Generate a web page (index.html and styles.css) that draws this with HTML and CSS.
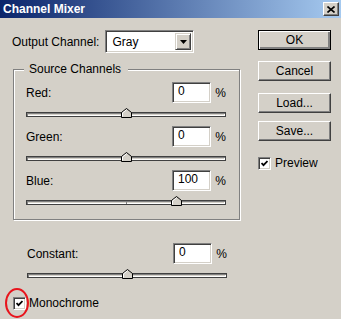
FILE: index.html
```html
<!DOCTYPE html>
<html lang="en">
<head>
  <meta charset="UTF-8">
  <meta name="viewport" content="width=device-width, initial-scale=1.0">
  <title>Channel Mixer</title>
  <link rel="stylesheet" href="styles.css">
</head>
<body>

<div class="window">
  <!-- Title bar -->
  <div class="titlebar">
    <span class="title">Channel Mixer</span>
    <button class="close" type="button">
      <svg width="8" height="7" viewBox="0 0 8 7"><path d="M0.5 0.5 L7.5 6.5 M7.5 0.5 L0.5 6.5" stroke="#000" stroke-width="1.6"/></svg>
    </button>
  </div>

  <div class="body">
    <div class="main">
      <div class="output-row">
        <span class="label">Output Channel:</span>
        <div class="select">
          <span class="select-text">Gray</span>
          <span class="drop">
            <svg width="7" height="4" viewBox="0 0 7 4"><path d="M0 0 H7 L3.5 4 Z" fill="#000"/></svg>
          </span>
        </div>
      </div>

      <!-- Source Channels group -->
      <fieldset class="group">
        <legend>Source Channels</legend>

        <div class="channel">
          <div class="value-row">
            <span class="name">Red:</span>
            <span class="field">0</span>
            <span class="pct">%</span>
          </div>
          <div class="slider">
            <div class="track"></div>
            <svg class="thumb" style="left: 50%;" width="11" height="10" viewBox="0 0 11 10"><path d="M0.5 9.5 V4.5 L5.5 0.5 L10.5 4.5 V9.5 Z" fill="#d4d0c8" stroke="#000"/><path d="M1.5 8.5 V5 L5.5 1.8" fill="none" stroke="#fff"/></svg>
          </div>
        </div>

        <div class="channel">
          <div class="value-row">
            <span class="name">Green:</span>
            <span class="field">0</span>
            <span class="pct">%</span>
          </div>
          <div class="slider">
            <div class="track"></div>
            <svg class="thumb" style="left: 50%;" width="11" height="10" viewBox="0 0 11 10"><path d="M0.5 9.5 V4.5 L5.5 0.5 L10.5 4.5 V9.5 Z" fill="#d4d0c8" stroke="#000"/><path d="M1.5 8.5 V5 L5.5 1.8" fill="none" stroke="#fff"/></svg>
          </div>
        </div>

        <div class="channel">
          <div class="value-row">
            <span class="name">Blue:</span>
            <span class="field">100</span>
            <span class="pct">%</span>
          </div>
          <div class="slider">
            <div class="track"><span class="mid"></span></div>
            <svg class="thumb" style="left: 75%;" width="11" height="10" viewBox="0 0 11 10"><path d="M0.5 9.5 V4.5 L5.5 0.5 L10.5 4.5 V9.5 Z" fill="#d4d0c8" stroke="#000"/><path d="M1.5 8.5 V5 L5.5 1.8" fill="none" stroke="#fff"/></svg>
          </div>
        </div>
      </fieldset>

      <!-- Constant -->
      <div class="channel constant">
        <div class="value-row">
          <span class="name">Constant:</span>
          <span class="field">0</span>
          <span class="pct">%</span>
        </div>
        <div class="slider">
          <div class="track"></div>
          <svg class="thumb" style="left: 50%;" width="11" height="10" viewBox="0 0 11 10"><path d="M0.5 9.5 V4.5 L5.5 0.5 L10.5 4.5 V9.5 Z" fill="#d4d0c8" stroke="#000"/><path d="M1.5 8.5 V5 L5.5 1.8" fill="none" stroke="#fff"/></svg>
        </div>
      </div>

      <div class="check mono">
        <span class="box">
          <svg width="7" height="7" viewBox="0 0 7 7"><path d="M0.5 3 L2.5 5.2 L6.5 1" fill="none" stroke="#000" stroke-width="1.8"/></svg>
        </span>
        <span>Monochrome</span>
        <span class="highlight"></span>
      </div>
    </div>

    <!-- Buttons -->
    <div class="side">
      <button class="btn default" type="button">OK</button>
      <button class="btn" type="button">Cancel</button>
      <button class="btn load" type="button">Load...</button>
      <button class="btn" type="button">Save...</button>
      <div class="check preview">
        <span class="box">
          <svg width="7" height="7" viewBox="0 0 7 7"><path d="M0.5 3 L2.5 5.2 L6.5 1" fill="none" stroke="#000" stroke-width="1.8"/></svg>
        </span>
        <span>Preview</span>
      </div>
    </div>
  </div>
</div>

</body>
</html>
```

FILE: styles.css
```css
body {
  margin: 0;
  padding: 0;
  font-family: "Liberation Sans", Arial, sans-serif;
  font-size: 12px;
  color: #000;
  background-color: #d4d0c8;
}

.window {
  width: 341px;
  height: 319px;
  background-color: #d4d0c8;
  overflow: hidden;
}

.titlebar {
  height: 18px;
  display: flex;
  align-items: center;
  justify-content: space-between;
  padding: 0 2px 0 3px;
  background: linear-gradient(to right, #0a246a, #a6caf0);
}

.title {
  color: #fff;
  font-weight: bold;
  font-size: 12px;
}

.close {
  width: 16px;
  height: 14px;
  padding: 0;
  display: flex;
  align-items: center;
  justify-content: center;
  background: #d4d0c8;
  border: 1px solid;
  border-color: #fff #404040 #404040 #fff;
  box-shadow: inset -1px -1px #808080;
}

.body {
  display: flex;
  padding: 12px 10px 0 12px;
}

.main {
  width: 228px;
}

.output-row {
  display: flex;
  align-items: center;
  height: 23px;
}

.output-row .label {
  margin-right: 6px;
}

.select {
  width: 89px;
  height: 23px;
  box-sizing: border-box;
  display: flex;
  align-items: center;
  justify-content: space-between;
  background: #fff;
  border: 1px solid;
  border-color: #808080 #fff #fff #808080;
  box-shadow: inset 1px 1px #404040, inset -1px -1px #d4d0c8;
  padding: 2px 2px 2px 6px;
}

.drop {
  width: 16px;
  height: 17px;
  box-sizing: border-box;
  display: flex;
  align-items: center;
  justify-content: center;
  background: #d4d0c8;
  border: 1px solid;
  border-color: #d4d0c8 #404040 #404040 #d4d0c8;
  box-shadow: inset 1px 1px #fff, inset -1px -1px #808080;
}

/* group box */
.group {
  margin: 9px 0 0 1px;
  width: 227px;
  box-sizing: border-box;
  padding: 6px 11px 5px 12px;
  border: 1px solid #808080;
  box-shadow: inset 1px 1px #fff, 1px 1px #fff;
}

.group legend {
  margin-left: -2px;
  padding: 0 7px 0 5px;
  line-height: 14px;
  background: #d4d0c8;
}

.channel {
  width: 200px;
}

.value-row {
  display: flex;
  align-items: center;
  height: 21px;
}

.value-row .name {
  flex: 1;
}

.field {
  width: 39px;
  height: 21px;
  box-sizing: border-box;
  padding: 0 0 0 5px;
  line-height: 17px;
  background: #fff;
  border: 1px solid;
  border-color: #808080 #fff #fff #808080;
  box-shadow: inset 1px 1px #404040, inset -1px -1px #d4d0c8;
}

.pct {
  width: 15px;
  text-align: right;
}

.slider {
  position: relative;
  height: 23px;
}

.track {
  position: relative;
  top: 9px;
  height: 5px;
  box-sizing: border-box;
  background: #d4d0c8;
  border: 1px solid;
  border-color: #404040 #404040 #404040 #404040;
  box-shadow: inset 1px 1px #808080, inset -1px -1px #fff;
}

.track .mid {
  position: absolute;
  left: 50%;
  top: 0;
  width: 1px;
  height: 3px;
  background: #808080;
}

.thumb {
  position: absolute;
  top: 5px;
  margin-left: -5px;
}

.constant {
  margin: 23px 0 0 15px;
}

.check {
  display: flex;
  align-items: center;
  gap: 3px;
}

.box {
  width: 13px;
  height: 13px;
  box-sizing: border-box;
  display: flex;
  align-items: center;
  justify-content: center;
  background: #fff;
  border: 1px solid;
  border-color: #808080 #fff #fff #808080;
  box-shadow: inset 1px 1px #404040, inset -1px -1px #d4d0c8;
}

.mono {
  position: relative;
  margin: 9px 0 0 1px;
}

.highlight {
  position: absolute;
  left: -8px;
  top: -8px;
  width: 20px;
  height: 26px;
  border: 2px solid #e8141c;
  border-radius: 50%;
}

.side {
  margin-left: 18px;
  width: 73px;
  display: flex;
  flex-direction: column;
}

.btn {
  width: 73px;
  height: 20px;
  padding: 0;
  margin-bottom: 11px;
  font-family: "Liberation Sans", Arial, sans-serif;
  font-size: 12px;
  color: #000;
  background: #d4d0c8;
  border: 1px solid;
  border-color: #fff #404040 #404040 #fff;
  box-shadow: inset -1px -1px #808080;
}

.btn.default {
  border: 1px solid #000;
  box-shadow: inset 1px 1px #fff, inset -2px -2px #808080, inset -1px -1px #404040;
}

.btn.load {
  margin-top: 1px;
}

.btn:nth-child(4) {
  margin-top: -3px;
}

.preview {
  margin: 4px 0 0 0;
  gap: 4px;
}
```
